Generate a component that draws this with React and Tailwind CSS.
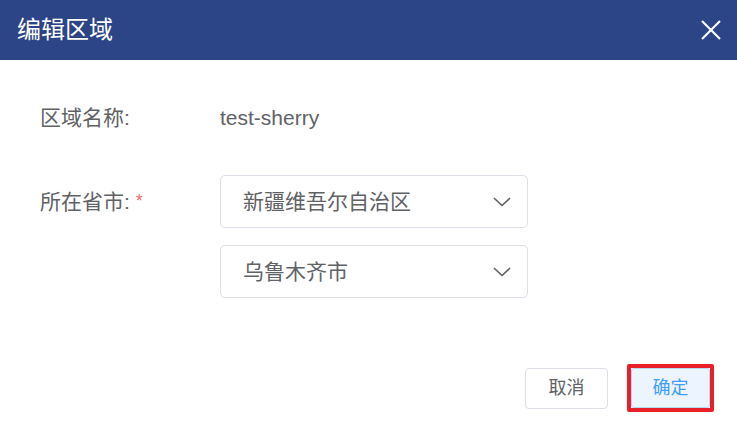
import React from 'react';

const font = { fontFamily: '"Liberation Sans", "Noto Sans CJK SC", sans-serif' };

const Chevron = () => (
  <svg width="18" height="10" viewBox="0 0 18 10" fill="none">
    <polyline points="1.5,1.5 9,8.5 16.5,1.5" stroke="#606266" strokeWidth="1.7" strokeLinecap="round" strokeLinejoin="round" />
  </svg>
);

const Select = ({ value }) => (
  <div className="w-[308px] h-[53px] border border-[#dcdfe6] rounded-[5px] flex items-center justify-between pl-[22px] pr-[16px] bg-white">
    <span className="text-[21px] text-[#606266]">{value}</span>
    <Chevron />
  </div>
);

export default function App() {
  return (
    <div className="w-[737px] h-[436px] bg-white flex flex-col" style={font}>
      {/* header */}
      <div className="h-[60px] bg-[#2b4586] flex items-center justify-between pl-[17px] pr-[15px]">
        <h1 className="text-[24px] text-white leading-none">编辑区域</h1>
        <svg width="22" height="22" viewBox="0 0 22 22">
          <line x1="2" y1="2" x2="20" y2="20" stroke="white" strokeWidth="2.2" />
          <line x1="20" y1="2" x2="2" y2="20" stroke="white" strokeWidth="2.2" />
        </svg>
      </div>

      {/* body */}
      <div className="pl-[40px] pt-[44px]">
        <div className="flex items-center h-[28px]">
          <span className="w-[180px] text-[21px] text-[#606266]">区域名称:</span>
          <span className="text-[21px] text-[#606266]">test-sherry</span>
        </div>

        <div className="flex mt-[43px]">
          <div className="w-[180px] h-[53px] flex items-center text-[21px] text-[#606266]">
            所在省市:<span className="text-[#f56c6c] ml-[6px] text-[18px]">*</span>
          </div>
          <div className="flex flex-col gap-[17px]">
            <Select value="新疆维吾尔自治区" />
            <Select value="乌鲁木齐市" />
          </div>
        </div>
      </div>

      {/* footer */}
      <div className="flex justify-end items-center gap-[19px] pr-[23px] mt-[66px]">
        <button className="w-[83px] h-[41px] border border-[#dcdfe6] rounded-[4px] bg-white text-[18px] text-[#606266]">
          取消
        </button>
        <div className="border-4 border-[#e8202a] rounded-[2px]">
          <button className="w-[79px] h-[40px] border border-[#b3d8ff] rounded-[3px] bg-[#ecf5ff] text-[18px] text-[#409eff] block">
            确定
          </button>
        </div>
      </div>
    </div>
  );
}
